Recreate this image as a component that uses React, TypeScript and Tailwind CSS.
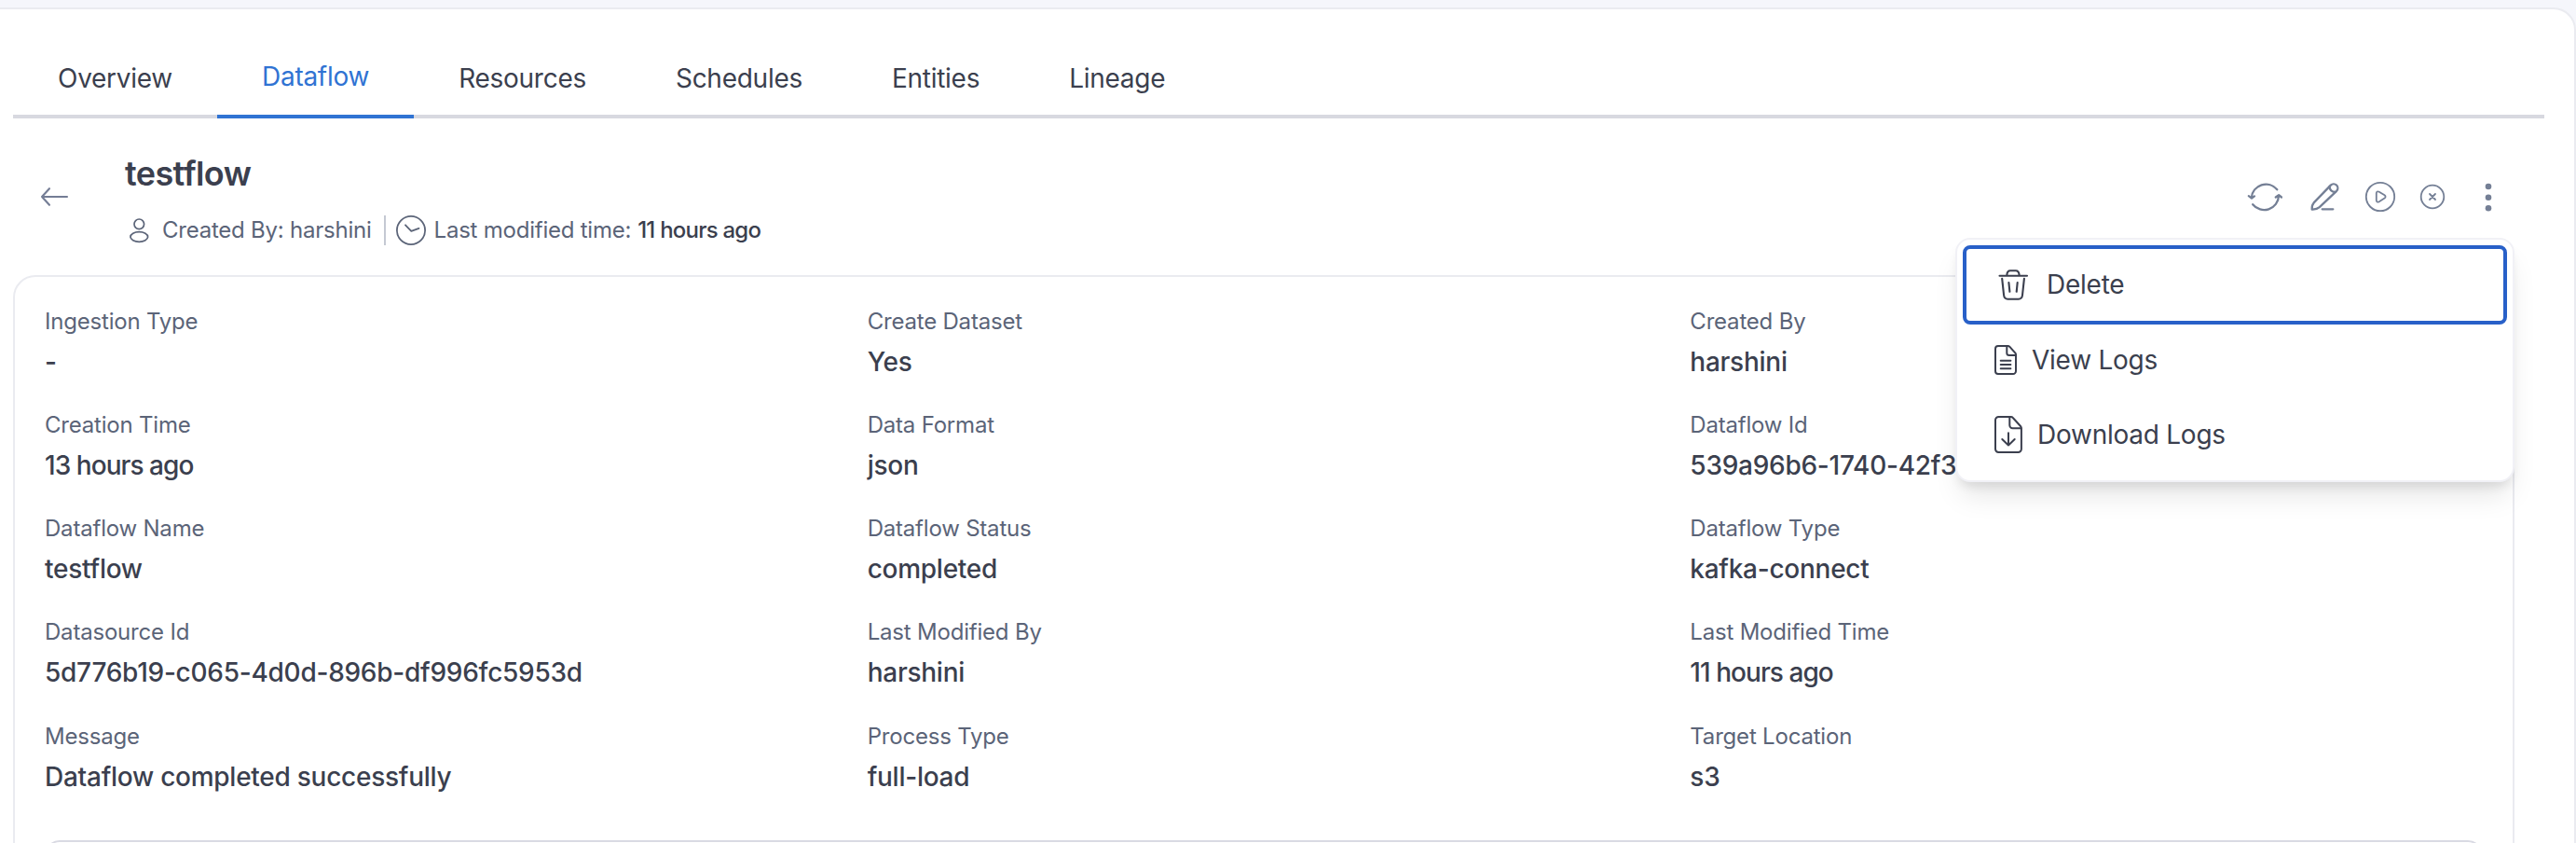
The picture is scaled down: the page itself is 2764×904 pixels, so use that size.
const tabs = ['Overview', 'Dataflow', 'Resources', 'Schedules', 'Entities', 'Lineage'];

interface Detail {
  label: string;
  value: string;
  relative?: boolean;
}

const details: Detail[] = [
  { label: 'Ingestion Type', value: '-' },
  { label: 'Create Dataset', value: 'Yes' },
  { label: 'Created By', value: 'harshini' },
  { label: 'Creation Time', value: '13 hours ago', relative: true },
  { label: 'Data Format', value: 'json' },
  { label: 'Dataflow Id', value: '539a96b6-1740-42f3' },
  { label: 'Dataflow Name', value: 'testflow' },
  { label: 'Dataflow Status', value: 'completed' },
  { label: 'Dataflow Type', value: 'kafka-connect' },
  { label: 'Datasource Id', value: '5d776b19-c065-4d0d-896b-df996fc5953d' },
  { label: 'Last Modified By', value: 'harshini' },
  { label: 'Last Modified Time', value: '11 hours ago', relative: true },
  { label: 'Message', value: 'Dataflow completed successfully' },
  { label: 'Process Type', value: 'full-load' },
  { label: 'Target Location', value: 's3' },
];

function ArrowLeftIcon() {
  return (
    <svg width="32" height="24" viewBox="0 0 32 24" fill="none" stroke="#747d95" strokeWidth="2.1" strokeLinecap="round" strokeLinejoin="round">
      <path d="M30 12H3M11 3.200L3 12l8 8.800" />
    </svg>
  );
}

function UserIcon() {
  return (
    <svg width="24" height="32" viewBox="0 0 24 32" fill="none" stroke="#5b6478" strokeWidth="1.7">
      <circle cx="12.3" cy="9.300" r="5.300" />
      <ellipse cx="12.3" cy="23" rx="9.300" ry="5.300" />
    </svg>
  );
}

function ClockIcon() {
  return (
    <svg width="34" height="34" viewBox="0 0 34 34" fill="none" stroke="#5b6478" strokeWidth="1.8" strokeLinecap="round" strokeLinejoin="round">
      <circle cx="17" cy="17" r="15.1" />
      <path d="M11 11.300l6.300 6.600 8.200-3" />
    </svg>
  );
}

function RefreshIcon() {
  return (
    <svg width="38" height="36" viewBox="0 0 38 36" fill="none" stroke="#747f95" strokeWidth="2.3" strokeLinecap="round" strokeLinejoin="round">
      <path d="M32.300 10.300A15.600 15.600 0 0 0 4.800 19v.5M1.800 17.200l3.200 2.400 3-2.200" />
      <path d="M6.200 26.200A15.600 15.600 0 0 0 34 17v-.5M30.800 18.500l3.300-2.300 2.900 2.300" />
    </svg>
  );
}

function EditIcon() {
  return (
    <svg width="32" height="32" viewBox="0 0 32 32" fill="none" stroke="#747f95" strokeWidth="2.3" strokeLinecap="round" strokeLinejoin="round">
      <path d="M2.700 29.600c-.3-3 .3-5.300 2-7.200L22.800 3.600a4.400 4.400 0 0 1 6.300 6.200L10.800 27.200c-2 1.800-4.500 2.600-8.100 2.400z" />
      <path d="M21.600 5c.1 3.500 2.400 5.900 6.100 6M13.700 29.300h11.600" />
    </svg>
  );
}

function PlayIcon() {
  return (
    <svg width="34" height="34" viewBox="0 0 34 34" fill="none" stroke="#747f95" strokeWidth="1.8" strokeLinejoin="round">
      <circle cx="17" cy="17" r="15.200" />
      <path d="M12.800 13.200c0-1.700 1.300-2.300 3-1.500l5.800 3.600c1.300.9 1.300 2.400 0 3.300l-5.800 3.700c-1.700.9-3 .2-3-1.500z" />
    </svg>
  );
}

function CancelIcon() {
  return (
    <svg width="28" height="28" viewBox="0 0 28 28" fill="none" stroke="#747f95" strokeWidth="1.800" strokeLinecap="round">
      <circle cx="14" cy="14" r="12.300" />
      <path d="M11 11l6 6M17 11l-6 6" />
    </svg>
  );
}

function MoreIcon() {
  return (
    <svg width="8" height="32" viewBox="0 0 8 32" fill="#747f95">
      <circle cx="4" cy="5" r="3.300" />
      <circle cx="4" cy="16.700" r="3.300" />
      <circle cx="4" cy="28.300" r="3.300" />
    </svg>
  );
}

function TrashIcon() {
  return (
    <svg width="34" height="34" viewBox="0 0 34 34" fill="none" stroke="#3b3f4e" strokeWidth="2.1" strokeLinecap="round" strokeLinejoin="round">
      <path d="M2.500 6.700h29.500M10.300 6.300c.2-3.500 1.200-5 3.700-5h5.800c2.500 0 3.600 1.500 3.900 5" />
      <path d="M5.200 9.800l1.900 17.700c.3 2.900 1.600 4.200 4.200 4.200h11.500c2.600 0 3.900-1.300 4.200-4.200L28.900 9.800M12.400 14l1 9.800M21.700 14l-1 9.800" />
    </svg>
  );
}

function FileTextIcon() {
  return (
    <svg width="24" height="32" viewBox="0 0 24 32" fill="none" stroke="#3b3f4e" strokeWidth="2" strokeLinecap="round" strokeLinejoin="round">
      <path d="M4 1h10.500c.7 0 1.200.2 1.700.7l6.200 7c.4.5.6 1 .6 1.700V28a3 3 0 0 1-3 3H4a3 3 0 0 1-3-3V4a3 3 0 0 1 3-3z" />
      <path d="M13.300 1.300v7.200a2.500 2.500 0 0 0 2.500 2.500h7M6.700 16.700h10.700M6.700 21h10.700M6.700 25.200h10.700" />
    </svg>
  );
}

function FileDownloadIcon() {
  return (
    <svg width="30" height="40" viewBox="0 0 30 40" fill="none" stroke="#3b3f4e" strokeWidth="2" strokeLinecap="round" strokeLinejoin="round">
      <path d="M4.500 1h13.200c.8 0 1.500.3 2.100 1l8.200 9c.6.7.9 1.400.9 2.200v22.300a3.500 3.500 0 0 1-3.500 3.500h-21A3.500 3.500 0 0 1 1 35.500v-31A3.500 3.500 0 0 1 4.500 1z" />
      <path d="M16.300 1.500V10a3.200 3.200 0 0 0 3.200 3.200h9M15 18.300v13.200M8.300 25l6.700 6.500 6.700-6.500" />
    </svg>
  );
}

function Tabs() {
  return (
    <nav className="ml-[14px] mr-8 flex h-[117px] items-end border-b-4 border-[#d8d9e0]">
      {tabs.map((tab) => (
        <button
          key={tab}
          className={`-mb-1 h-[70px] px-12 pb-4 text-[28px] leading-8 tracking-[-0.27px] ${
            tab === 'Dataflow' ? 'border-b-4 border-[#3073d3] text-[#3073d3]' : 'text-[#3b3f4e]'
          }`}
        >
          {tab}
        </button>
      ))}
    </nav>
  );
}

function ActionsMenu() {
  return (
    <div className="absolute right-0 top-32 z-10 h-[262px] w-[600px] rounded-2xl border-2 border-[#f1f1f6] bg-white p-1.5 text-[28px] tracking-[-0.25px] text-[#3b3f4e] shadow-[0_20px_30px_-6px_rgba(0,0,0,0.1),0_8px_12px_-4px_rgba(0,0,0,0.1)]">
      <button className="-mb-0.5 flex h-[85px] w-full items-center rounded-lg border-4 border-[#2860c8] pl-[33px]">
        <TrashIcon />
        <span className="ml-[19px] pb-0.5">Delete</span>
      </button>
      <button className="flex h-20 w-full items-center pl-[34px]">
        <FileTextIcon />
        <span className="ml-4">View Logs</span>
      </button>
      <button className="flex h-20 w-full items-center pl-[34px]">
        <FileDownloadIcon />
        <span className="ml-4">Download Logs</span>
      </button>
    </div>
  );
}

function Header() {
  return (
    <header className="relative ml-[14px] mr-16 flex h-[168px] items-start">
      <button className="ml-7 mt-[72px]">
        <ArrowLeftIcon />
      </button>
      <div className="ml-[60px] pt-9">
        <h1 className="text-[36px] font-semibold leading-[46px] tracking-[-0.6px] text-[#3b3f4e]">testflow</h1>
        <div className="mt-[22px] flex h-8 items-center pl-[3px] text-[24px] tracking-[-0.23px] text-[#5b6478]">
          <UserIcon />
          <span className="ml-[13px]">Created By: harshini</span>
          <span className="ml-[13px] h-8 w-[2px] bg-[#c5c9d3]" />
          <span className="ml-2.5">
            <ClockIcon />
          </span>
          <span className="ml-2">Last modified time:</span>
          <span className="ml-[7px] font-medium tracking-[-0.78px] text-[#3b3f4e]">11 hours ago</span>
        </div>
      </div>
      <div className="ml-auto mr-6 mt-[66px] flex h-9 items-center">
        <RefreshIcon />
        <span className="ml-[29px]">
          <EditIcon />
        </span>
        <span className="ml-[27px]">
          <PlayIcon />
        </span>
        <span className="ml-[25px]">
          <CancelIcon />
        </span>
        <span className="ml-[42px]">
          <MoreIcon />
        </span>
      </div>
      <ActionsMenu />
    </header>
  );
}

export default function App() {
  return (
    <div className="h-[904px] w-full overflow-hidden bg-[#f5f6fb] pt-2 font-['Inter',sans-serif]">
      <main className="h-[920px] rounded-tr-3xl border-r-2 border-t-2 border-[#eaebf0] bg-white">
        <Tabs />
        <Header />
        <section className="ml-[14px] mr-16 h-[640px] rounded-t-3xl border-2 border-[#eaebf0] pl-8 pt-[31.8px]">
          <dl className="grid grid-cols-3">
            {details.map((item) => (
              <div key={item.label} className="h-[111.2px]">
                <dt className="text-[24px] leading-8 tracking-[-0.2px] text-[#5b6478]">{item.label}</dt>
                <dd
                  className={`mt-[9px] text-[28px] font-medium leading-9 text-[#3b3f4e] ${
                    item.relative ? 'tracking-[-0.95px]' : 'tracking-[-0.26px]'
                  }`}
                >
                  {item.value}
                </dd>
              </div>
            ))}
          </dl>
          <div className="mr-8 mt-[16.2px] h-20 rounded-2xl border-2 border-[#d9dae3]" />
        </section>
      </main>
    </div>
  );
}
